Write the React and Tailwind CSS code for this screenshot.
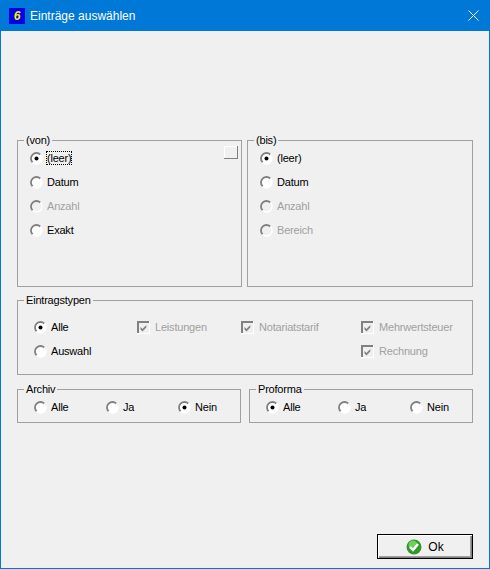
const ui = { fontFamily: '"Liberation Sans", Arial, sans-serif' };

function Radio({ checked, disabled, label, className = "" }) {
  return (
    <div className={"flex items-center gap-[4px] h-[13px] text-[11px] leading-[13px] tracking-[-0.2px] " + (disabled ? "text-[#a0a0a0] " : "text-black ") + className}>
      <svg width="13" height="13" viewBox="0 0 13 13" className="shrink-0 ml-[-1px]">
        <circle cx="6.5" cy="6.5" r="5.5" fill={disabled ? "#f0f0f0" : "#ffffff"} />
        <path d="M2.6 10.4A5.5 5.5 0 0 1 10.4 2.6" fill="none" stroke="#808080" strokeWidth="1.8" />
        <path d="M10.4 2.6A5.5 5.5 0 0 1 2.6 10.4" fill="none" stroke="#ffffff" strokeWidth="1.4" />
        {checked && <circle cx="6.5" cy="6.5" r="2" fill="#000000" />}
      </svg>
      <span>{label}</span>
    </div>
  );
}

function Check({ label, className = "" }) {
  return (
    <div className={"flex items-center gap-[5px] h-[13px] text-[11px] leading-[13px] tracking-[-0.2px] text-[#a0a0a0] " + className}>
      <svg width="13" height="13" viewBox="0 0 13 13" className="shrink-0">
        <rect width="13" height="13" fill="#ffffff" />
        <rect x="0" y="0" width="12" height="12" fill="#808080" />
        <rect x="2" y="2" width="10" height="10" fill="#f0f0f0" />
        <path d="M3.5 6l2 2 3.8-4v2.4L5.5 10.4 3.5 8.4z" fill="#808080" />
      </svg>
      <span>{label}</span>
    </div>
  );
}

function Group({ title, className = "", children }) {
  return (
    <fieldset className={"relative border border-[#a0a0a0] " + className}>
      <legend className="ml-[6px] px-[2px] text-[11px] leading-[13px] tracking-[-0.2px] text-black">{title}</legend>
      {children}
    </fieldset>
  );
}

export default function App() {
  return (
    <div className="w-[490px] h-[569px] flex flex-col bg-[#0078d7] px-px pb-px" style={ui}>
      <div className="h-[31px] shrink-0 flex items-center pl-[8px] pr-[10px] text-white">
        <span className="w-[16px] h-[16px] bg-[#0000e6] flex items-center justify-center text-[#ffee00] text-[12px] leading-none font-bold italic">6</span>
        <span className="ml-[5px] text-[12px]">Einträge auswählen</span>
        <svg width="11" height="11" viewBox="0 0 11 11" className="ml-auto">
          <path d="M0.5 0.5l10 10M10.5 0.5l-10 10" stroke="#ffffff" fill="none" />
        </svg>
      </div>

      <div className="flex-1 flex flex-col bg-[#f0f0f0] pl-[16px] pr-[16px] pt-[103px]">
        <div className="flex gap-[5px]">
          <Group title="(von)" className="w-[225px] h-[153px]">
            <div className="flex flex-col gap-[11px] pl-[13px] pt-[5px]">
              <Radio checked label={<span className="outline-1 outline-dotted outline-black">(leer)</span>} />
              <Radio label="Datum" />
              <Radio disabled label="Anzahl" />
              <Radio label="Exakt" />
            </div>
            <div className="absolute right-[3px] top-[-1px] w-[14px] h-[13px] bg-[#f0f0f0] border-r border-b border-[#808080] shadow-[inset_1px_1px_0_#ffffff]" />
          </Group>
          <Group title="(bis)" className="w-[226px] h-[153px]">
            <div className="flex flex-col gap-[11px] pl-[13px] pt-[5px]">
              <Radio checked label="(leer)" />
              <Radio label="Datum" />
              <Radio disabled label="Anzahl" />
              <Radio disabled label="Bereich" />
            </div>
          </Group>
        </div>

        <Group title="Eintragstypen" className="w-[456px] h-[81px] mt-[7px]">
          <div className="grid grid-cols-[102px_104px_120px_auto] gap-y-[11px] pl-[17px] pt-[14px]">
            <Radio checked label="Alle" />
            <Check label="Leistungen" />
            <Check label="Notariatstarif" />
            <Check label="Mehrwertsteuer" />
            <Radio label="Auswahl" />
            <div />
            <div />
            <Check label="Rechnung" />
          </div>
        </Group>

        <div className="flex gap-[8px] mt-[8px]">
          <Group title="Archiv" className="w-[224px] h-[40px]">
            <div className="grid grid-cols-[72px_72px_auto] pl-[17px] pt-[5px]">
              <Radio label="Alle" />
              <Radio label="Ja" />
              <Radio checked label="Nein" />
            </div>
          </Group>
          <Group title="Proforma" className="w-[224px] h-[40px]">
            <div className="grid grid-cols-[72px_72px_auto] pl-[17px] pt-[5px]">
              <Radio checked label="Alle" />
              <Radio label="Ja" />
              <Radio label="Nein" />
            </div>
          </Group>
        </div>

        <div className="mt-auto mb-[9px] flex justify-end">
          <button className="w-[96px] h-[25px] border border-black bg-[#f0f0f0] shadow-[inset_1px_1px_0_#ffffff,inset_-1px_-1px_0_#808080,inset_-2px_-2px_0_#a0a0a0] flex items-center justify-center gap-[6px] text-[12px] text-black">
            <svg width="16" height="16" viewBox="0 0 16 16">
              <circle cx="8" cy="8" r="7.5" fill="#2f9a2b" />
              <circle cx="7" cy="6" r="4.5" fill="#74cc5e" />
              <path d="M4 8l3 3 5-6" fill="none" stroke="#ffffff" strokeWidth="2.4" />
            </svg>
            <span>Ok</span>
          </button>
        </div>
      </div>
    </div>
  );
}
